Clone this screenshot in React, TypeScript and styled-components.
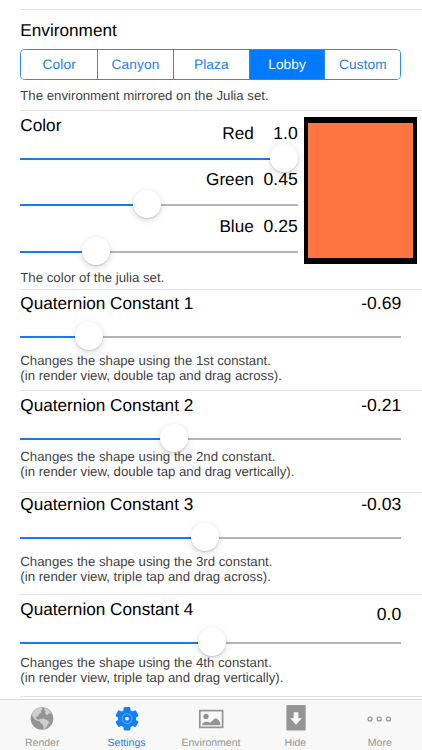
import React from "react";
import styled, { createGlobalStyle } from "styled-components";

const GlobalStyle = createGlobalStyle`
  * { box-sizing: border-box; }
  body { margin: 0; background: #fff; }
`;

const BLUE = "#007aff";

const Screen = styled.div`
  width: 422px;
  height: 750px;
  overflow: hidden;
  display: flex;
  flex-direction: column;
  background: #fff;
  color: #000;
  font-family: "Liberation Sans", Arial, Helvetica, sans-serif;
  text-rendering: geometricPrecision;
`;

const Settings = styled.main`
  height: 699px;
  padding: 9px 0 0 20.3px;
`;

const Section = styled.section<{ $height: number }>`
  height: ${(p) => p.$height}px;
  border-top: 1px solid #e4e4e6;
`;

const Title = styled.h2<{ $top?: number }>`
  margin: ${(p) => p.$top ?? 0}px 0 0;
  height: 20px;
  font-size: 17.2px;
  line-height: 20px;
  font-weight: 400;
  white-space: nowrap;
`;

const Value = styled.span<{ $top?: number }>`
  margin-top: ${(p) => p.$top ?? 0}px;
  height: 20px;
  font-size: 17.6px;
  line-height: 20px;
  text-align: right;
`;

const Caption = styled.p<{ $top: number }>`
  position: relative;
  z-index: 1;
  margin: ${(p) => p.$top}px 0 0;
  font-size: 13.23px;
  line-height: 15px;
  color: #3f3f3f;
  white-space: pre-line;
`;

const Segmented = styled.div`
  display: grid;
  grid-template-columns: repeat(5, 1fr);
  width: 381px;
  height: 31px;
  margin-top: 9px;
  border: 1px solid #2b8af2;
  border-radius: 4.5px;
  overflow: hidden;
`;

const Segment = styled.button<{ $active?: boolean }>`
  padding: 0 0 1px;
  border: 0;
  border-left: 1px solid #2b8af2;
  background: ${(p) => (p.$active ? BLUE : "#fff")};
  color: ${(p) => (p.$active ? "#fff" : "#1c7fe8")};
  font: 13.7px "Liberation Sans", Arial, sans-serif;
  letter-spacing: 0.1px;
  text-rendering: geometricPrecision;
  &:first-child { border-left: 0; }
`;

const TitleRow = styled.div<{ $top: number }>`
  display: flex;
  justify-content: space-between;
  width: 381px;
  height: 20px;
  margin-top: ${(p) => p.$top}px;
`;

const Rail = styled.div<{ $top: number; $width: number }>`
  position: relative;
  width: ${(p) => p.$width}px;
  height: 2px;
  margin-top: ${(p) => p.$top}px;
  background: #b5b5b6;
`;

const Fill = styled.div`
  height: 2px;
  background: #147bf0;
`;

const Thumb = styled.div`
  position: absolute;
  top: -14px;
  width: 28px;
  height: 28px;
  margin-left: -14px;
  border-radius: 50%;
  background: #fff;
  box-shadow: 0 2px 6px rgba(0, 0, 0, 0.17), 0 1px 1px rgba(0, 0, 0, 0.12);
`;

const ColorGrid = styled.div`
  display: grid;
  grid-template-columns: 283.4px 113px;
  height: 156px;
`;

const Swatch = styled.div`
  width: 113px;
  height: 147px;
  margin-top: 6px;
  border: solid #000;
  border-width: 6px 4px;
  background: #ff7541;
`;

const ChannelRow = styled.div<{ $top: number }>`
  position: relative;
  z-index: 1;
  display: grid;
  grid-template-columns: 1fr 60px 44px;
  width: 277.5px;
  height: 20px;
  margin-top: ${(p) => p.$top}px;
`;

const ChannelName = styled.span`
  font-size: 17.2px;
  line-height: 20px;
  text-align: right;
`;

const TabBar = styled.nav`
  display: grid;
  grid-template-columns: repeat(5, 1fr);
  height: 51px;
  border-top: 1px solid #d9d9da;
  background: #f8f8f8;
`;

const Tab = styled.a<{ $active?: boolean }>`
  display: flex;
  flex-direction: column;
  align-items: center;
  color: ${(p) => (p.$active ? "#1580f5" : "#949494")};
  font-size: 10.5px;
  line-height: 12px;
  svg { width: 28px; height: 28px; margin: 5px 0 4px; display: block; }
`;

type SliderProps = { top: number; width: number; position: number };

function Slider({ top, width, position }: SliderProps) {
  return (
    <Rail $top={top} $width={width}>
      <Fill style={{ width: position }} />
      <Thumb style={{ left: position }} />
    </Rail>
  );
}

const constants = [
  { name: "Quaternion Constant 1", value: "-0.69", note: "Changes the shape using the 1st constant.\n(in render view, double tap and drag across).", height: 101, top: 3, shift: 0, gap: 23, noteTop: 15, position: 68.8 },
  { name: "Quaternion Constant 2", value: "-0.21", note: "Changes the shape using the 2nd constant.\n(in render view, double tap and drag vertically).", height: 102, top: 4, shift: 0, gap: 23, noteTop: 9, position: 153.7 },
  { name: "Quaternion Constant 3", value: "-0.03", note: "Changes the shape using the 3rd constant.\n(in render view, triple tap and drag across).", height: 102, top: 1, shift: 0, gap: 23, noteTop: 15, position: 185.1 },
  { name: "Quaternion Constant 4", value: "0.0", note: "Changes the shape using the 4th constant.\n(in render view, triple tap and drag vertically).", height: 102, top: 4, shift: 5, gap: 23, noteTop: 11, position: 191.3 },
];

const GlobeIcon = () => (
  <svg viewBox="0 0 28 28">
    <circle cx="14" cy="13.5" r="11.3" fill="#949494" />
    <path d="M4.8 7.2 8.2 3.7 13 2.5l1.8 1.6-2 1.3.9 1.8-2.8 1.7-.6 2.3-2.4.5.5 2 2.8 1.3-1 1.4-3.6-2.2L3.9 10.4ZM10.8 14.4l4.4-1 3.8 1.6 2.8 2.2-1.9 2.4-1.7 3.2-2.4 1.4-.9-4.4-3-2.5ZM17.2 3l3.5 2 2.9 3.8-3-.4-1.4 1.8-2.2-2 .8-2.2-1.8-1Z" fill="#cfcfcf" />
  </svg>
);

const GearIcon = () => (
  <svg viewBox="0 0 28 28">
    <g fill="#1580f5">
      <circle cx="14" cy="13.7" r="9.2" />
      {[0, 60, 120].map((angle) => (
        <rect key={angle} x="10.6" y="2" width="6.8" height="23.4" rx="1.3" transform={`rotate(${angle} 14 13.7)`} />
      ))}
    </g>
    <circle cx="14" cy="13.7" r="5" fill="none" stroke="#64adfc" strokeWidth="1" />
    <circle cx="14" cy="13.7" r="1.9" fill="#f8f8f8" />
  </svg>
);

const PictureIcon = () => (
  <svg viewBox="0 0 28 28">
    <rect x="2.8" y="5.6" width="22.8" height="16.8" fill="none" stroke="#949494" strokeWidth="1.7" />
    <circle cx="9" cy="11.4" r="2.7" fill="#949494" />
    <path d="M5.2 20.2v-1.4l2.7-2h3l2.4 1 3.7-3.9 1.7-.7 2.1 1 2.4 3v3Z" fill="#949494" />
  </svg>
);

const HideIcon = () => (
  <svg viewBox="0 0 28 28">
    <rect x="5.4" y="0.1" width="19.3" height="25.5" rx="1.2" fill="#949494" />
    <path d="M12.7 7.3h4.7v6h3.4L15 19.8l-5.8-6.5h3.5Z" fill="#f8f8f8" />
  </svg>
);

const MoreIcon = () => (
  <svg viewBox="0 0 28 28" fill="none" stroke="#8e8e8e" strokeWidth="1.1">
    <circle cx="4" cy="14" r="2" />
    <circle cx="13.2" cy="14" r="2" />
    <circle cx="22.5" cy="14" r="2" />
  </svg>
);

export default function App() {
  return (
    <Screen>
      <GlobalStyle />
      <Settings>
        <Section $height={101}>
          <Title $top={10}>Environment</Title>
          <Segmented>
            <Segment>Color</Segment>
            <Segment>Canyon</Segment>
            <Segment>Plaza</Segment>
            <Segment $active>Lobby</Segment>
            <Segment>Custom</Segment>
          </Segmented>
          <Caption $top={8}>The environment mirrored on the Julia set.</Caption>
        </Section>

        <Section $height={179}>
          <ColorGrid>
            <div>
              <TitleRow $top={4}>
                <Title>Color</Title>
              </TitleRow>
              <ChannelRow $top={-12}>
                <span />
                <ChannelName>Red</ChannelName>
                <Value>1.0</Value>
              </ChannelRow>
              <Slider top={15} width={277.5} position={263.5} />
              <ChannelRow $top={9}>
                <span />
                <ChannelName>Green</ChannelName>
                <Value>0.45</Value>
              </ChannelRow>
              <Slider top={15} width={277.5} position={127} />
              <ChannelRow $top={10}>
                <span />
                <ChannelName>Blue</ChannelName>
                <Value>0.25</Value>
              </ChannelRow>
              <Slider top={15} width={277.5} position={76.2} />
            </div>
            <Swatch />
          </ColorGrid>
          <Caption $top={3}>The color of the julia set.</Caption>
        </Section>

        {constants.map((c) => (
          <Section key={c.name} $height={c.height}>
            <TitleRow $top={c.top}>
              <Title>{c.name}</Title>
              <Value $top={c.shift}>{c.value}</Value>
            </TitleRow>
            <Slider top={c.gap} width={381} position={c.position} />
            <Caption $top={c.noteTop}>{c.note}</Caption>
          </Section>
        ))}
        <Section $height={2} />
      </Settings>

      <TabBar>
        <Tab><GlobeIcon />Render</Tab>
        <Tab $active><GearIcon />Settings</Tab>
        <Tab><PictureIcon />Environment</Tab>
        <Tab><HideIcon />Hide</Tab>
        <Tab><MoreIcon />More</Tab>
      </TabBar>
    </Screen>
  );
}
